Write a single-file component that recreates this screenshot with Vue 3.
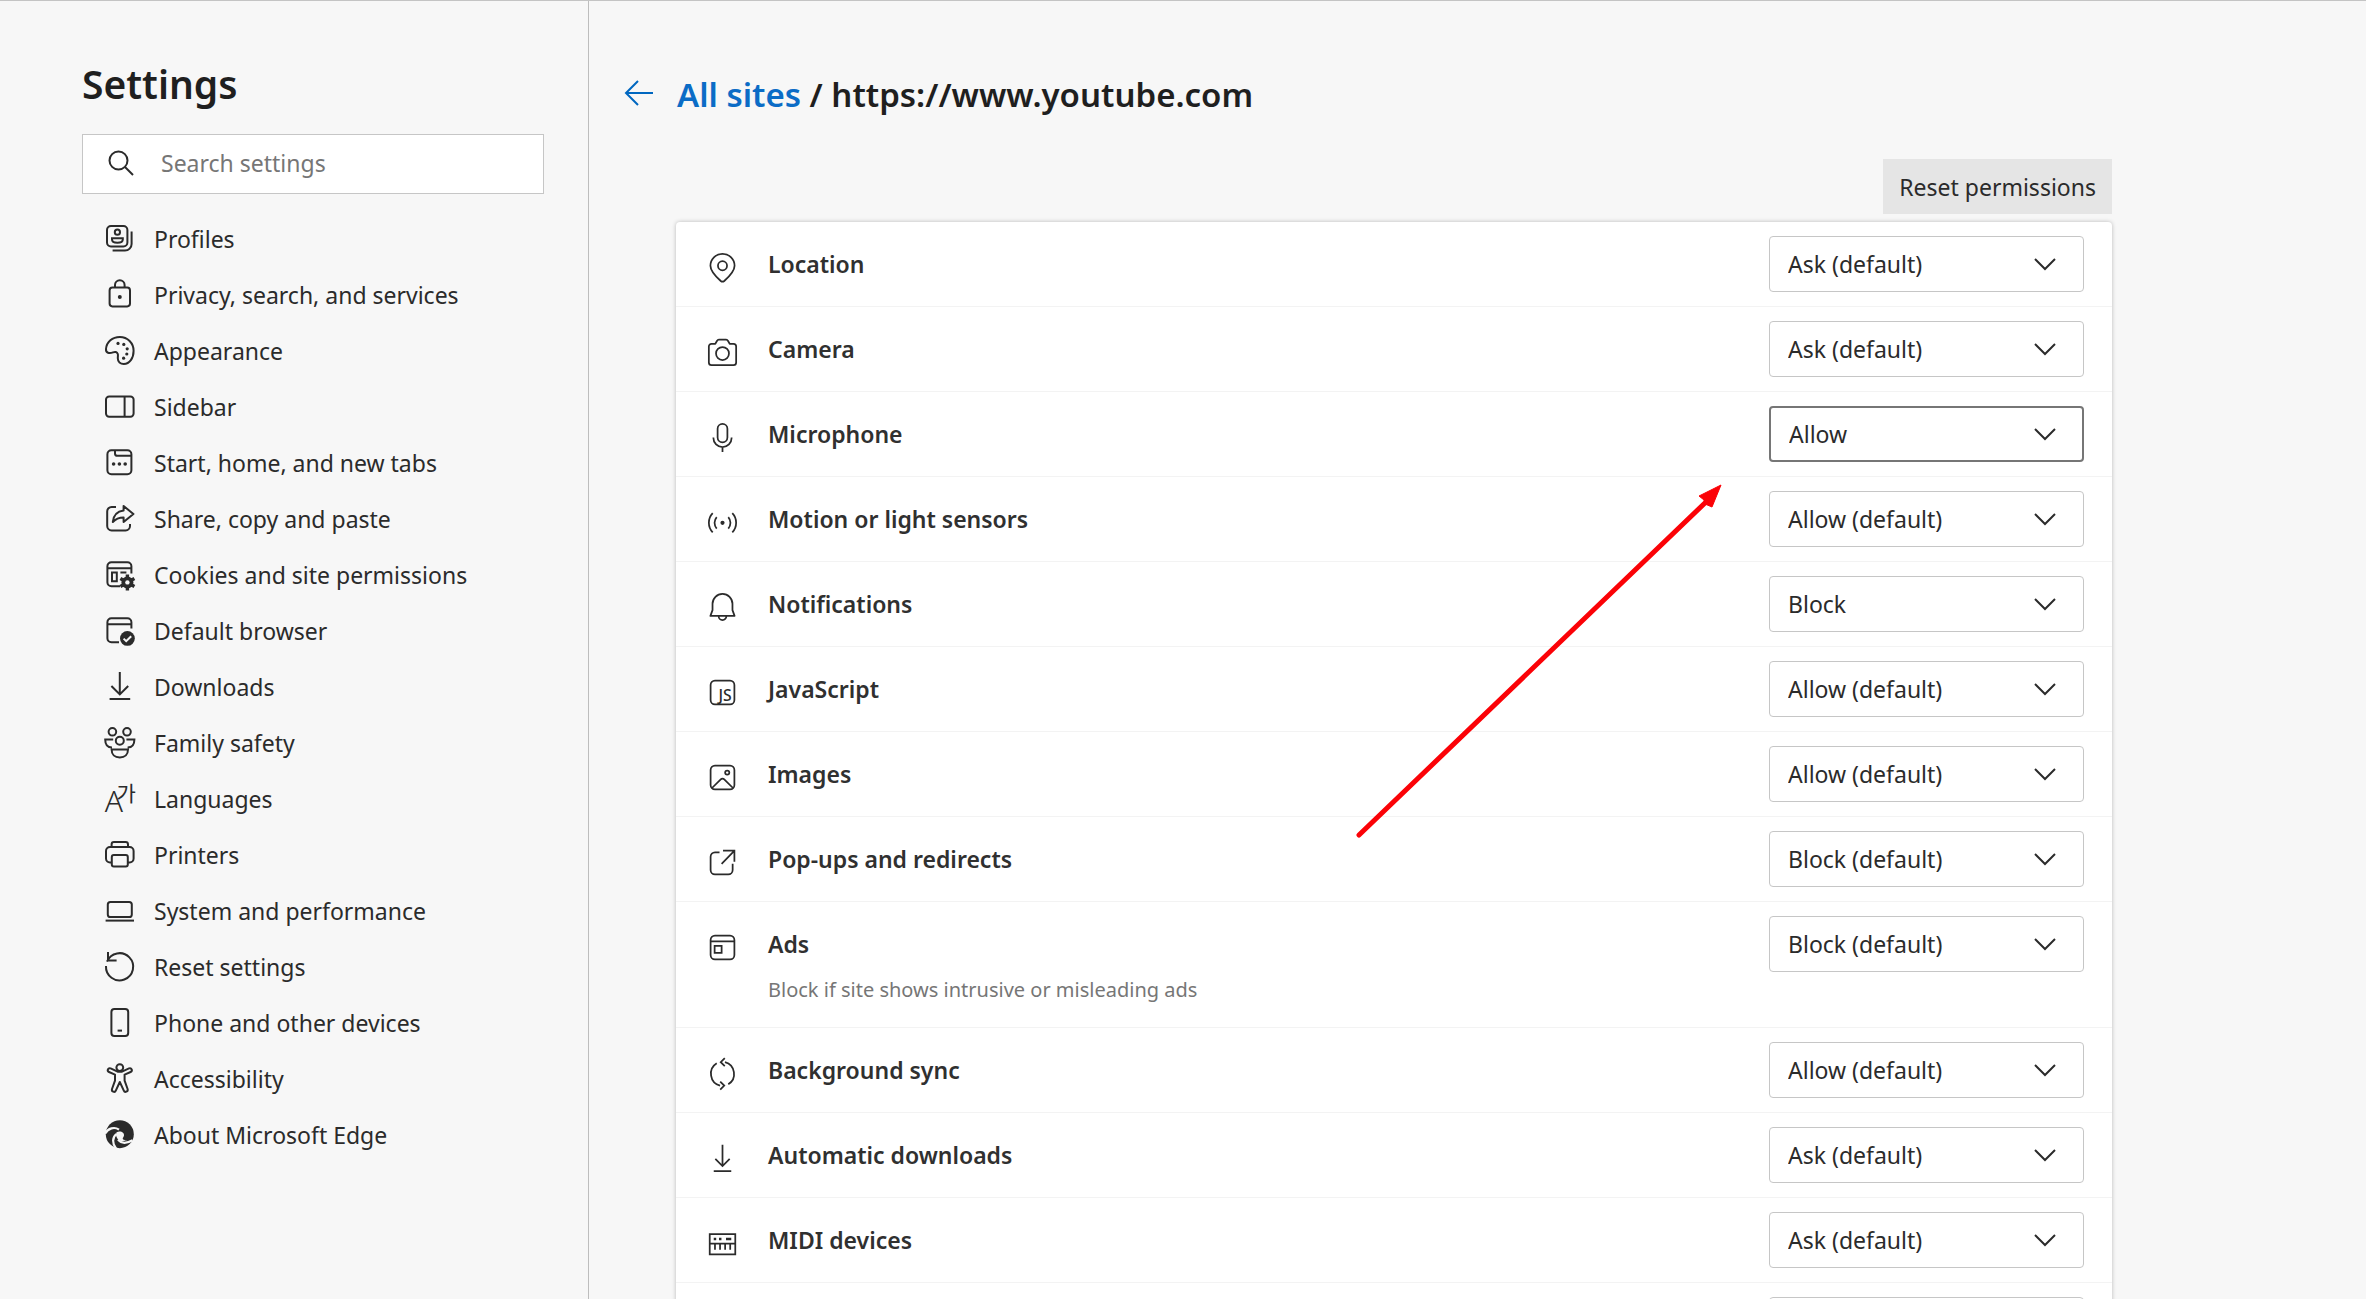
<script setup>
import { ref } from 'vue'

const search = ref("")

// sidebar icons, 16 x 16 grid
const navItems = [
  { label: "Profiles", icon: '<rect x="1.5" y="1.5" width="10.2" height="10.2" rx="2"/><path d="M13.8 4.3v6.2a3.3 3.3 0 0 1-3.3 3.3H4.3"/><circle cx="6.7" cy="4.6" r="1.3"/><path d="M4 7.6h5.4v.7c0 1-1 1.6-2.7 1.6S4 9.3 4 8.3z"/>' },
  { label: "Privacy, search, and services", icon: '<rect x="2.8" y="4.3" width="10.2" height="9.4" rx="1.4"/><path d="M5.5 4.3V3a2.4 2.4 0 0 1 4.8 0v1.3"/><circle cx="7.9" cy="9" r=".5" fill="currentColor"/>' },
  { label: "Appearance", icon: '<path d="M1 7C1.3 3.4 4.2 1 7.9 1c3.9 0 6.9 3 6.9 6.9 0 3.7-2 6.6-4.9 6.6-1.7 0-3-1.1-3-2.9 0-1 .2-1.5 0-2.1-.4-1.1-1.4-1.2-2.4-.8C2.7 9.4.8 9.1 1 7z"/><g fill="currentColor" stroke="none"><circle cx="7" cy="4.2" r=".8"/><circle cx="9.9" cy="4.7" r=".8"/><circle cx="11.6" cy="6.9" r=".8"/><circle cx="11.4" cy="9.5" r=".8"/><circle cx="9.8" cy="11.6" r=".8"/></g>' },
  { label: "Sidebar", icon: '<rect x="1" y="2.7" width="13.8" height="10.2" rx="1.6"/><path d="M10.3 2.7v10.2"/>' },
  { label: "Start, home, and new tabs", icon: '<rect x="1.7" y="1.6" width="12" height="12" rx="2"/><path d="M5.5 1.6v1.6a1.2 1.2 0 0 0 1.2 1.2h7"/><g fill="currentColor" stroke="none"><circle cx="4.8" cy="8.5" r=".9"/><circle cx="7.7" cy="8.5" r=".9"/><circle cx="10.6" cy="8.5" r=".9"/></g>' },
  { label: "Share, copy and paste", icon: '<path d="M6 2H3.8a2.2 2.2 0 0 0-2.2 2.2v7.3a2.2 2.2 0 0 0 2.2 2.2h7a2.2 2.2 0 0 0 2.2-2.2v-1"/><path stroke-linejoin="round" d="M9.8 1.5v2.2C6.5 4.1 4.7 6.3 4.4 9.5c1.5-1.7 3.2-2.3 5.4-2.3v2.3l4.9-4z"/>' },
  { label: "Cookies and site permissions", icon: '<path d="M8 13.6H3.7a2 2 0 0 1-2-2v-8a2 2 0 0 1 2-2h8a2 2 0 0 1 2 2v3.6M1.7 4.6h12"/><path d="M4 6.8h2.4v4.3H4zM8.2 6.8h3"/><circle cx="11.7" cy="11.7" r="3" fill="currentColor" stroke="none"/><path stroke-width="1.7" d="M11.7 7.7v8M8.2 9.7l7 4M8.2 13.7l7-4"/><circle cx="11.7" cy="11.7" r="1.1" fill="#f7f7f7" stroke="none"/>' },
  { label: "Default browser", icon: '<path d="M7.5 13.6H3.7a2 2 0 0 1-2-2v-8a2 2 0 0 1 2-2h8a2 2 0 0 1 2 2v3.2M1.7 4.6h12"/><circle cx="11.7" cy="11.7" r="3.7" fill="currentColor" stroke="none"/><path stroke="#f7f7f7" d="M9.8 11.8l1.3 1.3 2.5-2.5"/>' },
  { label: "Downloads", icon: '<path d="M7.9.5v11M3.7 7.5l4.2 4.2 4.2-4.2M2.8 14h10.3"/>' },
  { label: "Family safety", icon: '<circle cx="4.2" cy="2.4" r="1.9"/><circle cx="11.5" cy="2.4" r="1.9"/><circle cx="7.9" cy="6.9" r="2"/><path d="M4.6 6.2H.6c0 2.6 1 4 3.4 4M11.2 6.2h4c0 2.6-1 4-3.4 4M3.8 11.2h8.2c0 2.4-1.5 4-4.1 4s-4.1-1.6-4.1-4z"/>' },
  { label: "Languages", icon: '<g fill="currentColor" stroke="none"><text x=".4" y="14.3" font-size="15" font-family="Noto Sans" font-weight="300">A</text><text x="6.2" y="9.2" font-size="10.5" font-family="Noto Sans CJK KR">가</text></g>' },
  { label: "Printers", icon: '<path d="M4 11.7H3a2 2 0 0 1-2-2V6a2 2 0 0 1 2-2h9.8a2 2 0 0 1 2 2v3.7a2 2 0 0 1-2 2h-1"/><path d="M3.8 4V2.7A1.2 1.2 0 0 1 5 1.5h5.8A1.2 1.2 0 0 1 12 2.7V4"/><rect x="3.9" y="8" width="8" height="5.7" rx="1"/>' },
  { label: "System and performance", icon: '<rect x="1.9" y="3.5" width="12" height="7.5" rx="1.3"/><path d="M.8 12.8H15"/>' },
  { label: "Reset settings", icon: '<path d="M1.5 5.3A6.8 6.8 0 1 1 1 7.5M2 .5v4.3h4.3"/>' },
  { label: "Phone and other devices", icon: '<rect x="3.7" y="1" width="8.4" height="13.5" rx="1.5"/><path d="M6.8 11.8h2.2"/>' },
  { label: "Accessibility", icon: '<circle cx="7.9" cy="2.3" r="1.7"/><path stroke-linejoin="round" d="M6 3.9L3.3 2.7c-1.3-.5-2 1.3-.8 1.8l3 1.3v3L4 13c-.4 1.3 1.4 2 1.9.8l2-4.3 2 4.3c.5 1.2 2.3.5 1.9-.8l-1.5-4.2v-3l3-1.3c1.2-.5.5-2.3-.8-1.8L9.8 3.9c-1.1.6-2.7.6-3.8 0z"/>' },
  { label: "About Microsoft Edge", icon: '<circle cx="7.9" cy="7.6" r="7" fill="currentColor" stroke="none"/><g stroke="#f7f7f7" stroke-width="1.1"><path d="M.6 7.2C2 4.6 5.2 3.7 7.5 5.3M6 14.7c-2-2.5-1.9-5.5.2-7.2M7 10.3c1.8 2.2 4.8 1.7 7.3.3"/></g><path fill="#f7f7f7" stroke="none" d="M6.3 6.6c2.2-.9 3.9.3 3.7 1.7-.1.9-.8 1.1-.6 1.7.2.5 1.3.7 2.2.5-2 1-4.2.6-5-.9-.6-1.1-.8-2-.3-3z"/>' },
]

const options = ["Ask (default)", "Ask", "Allow (default)", "Allow", "Block (default)", "Block"]

// card icons, 20 x 20 grid
const permissions = ref([
  { label: "Location", value: "Ask (default)", icon: '<path stroke-linejoin="round" d="M10 2.2c3.9 0 6.9 3 6.9 6.8 0 3-2.3 5.5-5.9 8.7-.6.5-1.4.5-2 0C5.4 14.5 3.1 12 3.1 9c0-3.8 3-6.8 6.9-6.8z"/><circle cx="10" cy="9" r="2.6"/>' },
  { label: "Camera", value: "Ask (default)", icon: '<path stroke-linejoin="round" d="M2.2 6.5a1.5 1.5 0 0 1 1.5-1.5h2.2l1-1.7c.2-.4.6-.6 1-.6h4.2c.4 0 .8.2 1 .6l1 1.7h2.2a1.5 1.5 0 0 1 1.5 1.5v9.2a1.5 1.5 0 0 1-1.5 1.5H3.7a1.5 1.5 0 0 1-1.5-1.5z"/><circle cx="10" cy="10.6" r="3.7"/>' },
  { label: "Microphone", value: "Allow", focused: true, icon: '<rect x="7.2" y="2.2" width="5.6" height="10.6" rx="2.8"/><path d="M4.8 10v.3a5.2 5.2 0 0 0 10.4 0V10M10 15.5v2.8"/>' },
  { label: "Motion or light sensors", value: "Allow (default)", icon: '<circle cx="10" cy="10.2" r="1.2" fill="currentColor" stroke="none"/><path d="M6.7 6.9a5 5 0 0 0 0 6.6M13.3 6.9a5 5 0 0 1 0 6.6M4.4 4.7a8 8 0 0 0 0 11M15.6 4.7a8 8 0 0 1 0 11"/>' },
  { label: "Notifications", value: "Block", icon: '<path stroke-linejoin="round" d="M10 2.2a5.7 5.7 0 0 1 5.7 5.7v3.6l1.2 3.3H3.1l1.2-3.3V7.9A5.7 5.7 0 0 1 10 2.2zM7.8 15a2.2 2.2 0 0 0 4.4 0"/>' },
  { label: "JavaScript", value: "Allow (default)", icon: '<rect x="3.2" y="3.2" width="13.6" height="13.6" rx="2.5"/><text x="7.7" y="15.1" font-size="9" font-weight="500" font-family="Noto Sans" fill="currentColor" stroke="none">JS</text>' },
  { label: "Images", value: "Allow (default)", icon: '<rect x="3.2" y="3.2" width="13.6" height="13.6" rx="2.5"/><circle cx="12.7" cy="7.2" r="1.2"/><path d="M4 16l5-4.9a1.4 1.4 0 0 1 2 0l5 4.9"/>' },
  { label: "Pop-ups and redirects", value: "Block (default)", icon: '<path d="M8.3 4.2H5.7a2.5 2.5 0 0 0-2.5 2.5v7.6a2.5 2.5 0 0 0 2.5 2.5h7.6a2.5 2.5 0 0 0 2.5-2.5v-3.6M10.3 3.2h6.5v6.3M16.7 3.3l-7.2 7.5"/>' },
  { label: "Ads", value: "Block (default)", note: "Block if site shows intrusive or misleading ads", icon: '<rect x="3.2" y="3.2" width="13.6" height="13.6" rx="2.5"/><path d="M3.2 6.5h13.6M5.5 9h4v4h-4z"/>' },
  { label: "Background sync", value: "Allow (default)", icon: '<path d="M6.7 4.2a7 7 0 0 0 1.9 12.7M13.3 16.2a7 7 0 0 0-1.9-12.7M11.3 1.2L9 3.5l2.3 2.3M8.7 14.6l2.3 2.3-2.3 2.3"/>' },
  { label: "Automatic downloads", value: "Ask (default)", icon: '<path d="M10 2.2v12M5.9 10.2l4.1 4.1 4.1-4.1M5 17.2h10"/>' },
  { label: "MIDI devices", value: "Ask (default)", icon: '<path d="M2.7 4.7h14.6v11.5H2.7zM2.7 10h14.6M5.7 10v3.5M8.6 10v3.5M11.5 10v3.5M14.4 10v3.5"/><path stroke-width="1.4" d="M5 7.4h1.4M8 7.4h1.4M12 7.4h3"/>' },
  { label: "", value: "", icon: "" },
])

const resetPermissions = () => {
  permissions.value.forEach(item => {
    if (item.value === "Allow" || item.value === "Block") {
      item.value = "Ask (default)"
    }
  })
}
</script>

<template>
  <div class="page">
    <aside class="sidebar">
      <h1>Settings</h1>
      <label class="search">
        <svg viewBox="0 0 26 26"><circle cx="10.5" cy="10.5" r="9" /><path d="M17 17l8 8" /></svg>
        <input type="text" v-model="search" placeholder="Search settings" aria-label="Search settings">
      </label>
      <nav>
        <a href="#" v-for="item in navItems" :key="item.label">
          <svg viewBox="0 0 16 16" v-html="item.icon"></svg>
          <span>{{ item.label }}</span>
        </a>
      </nav>
    </aside>

    <main>
      <header>
        <a href="#" class="back" aria-label="Back">
          <svg viewBox="0 0 30 26"><path d="M29 13H2M14 1L2 13l12 12" /></svg>
        </a>
        <h2><a href="#">All sites</a> / https://www.youtube.com</h2>
      </header>
      <div class="content">
        <div class="actions">
          <button @click="resetPermissions">Reset permissions</button>
        </div>
        <div class="card">
          <div class="row" v-for="(item, i) in permissions" :key="i">
            <svg class="icon" viewBox="0 0 20 20" v-html="item.icon"></svg>
            <div class="text">
              <label :for="'permission-' + i">{{ item.label }}</label>
              <p v-if="item.note">{{ item.note }}</p>
            </div>
            <div class="select" :class="{ focused: item.focused }">
              <select :id="'permission-' + i" v-model="item.value">
                <option v-for="option in options" :key="option">{{ option }}</option>
              </select>
              <svg viewBox="0 0 22 12"><path d="M1 1l10 10L21 1" /></svg>
            </div>
          </div>
        </div>
        <svg class="arrow" viewBox="0 0 368 354">
          <path d="M4 350L352 16" stroke="#fb0207" stroke-width="5" stroke-linecap="round" />
          <path d="M366 0l-22 11 5 4 1 4 7 3z" fill="#fb0207" stroke="#fb0207" />
        </svg>
      </div>
    </main>
  </div>
</template>

<style>
body {
  background-color: #f7f7f7;
}
</style>

<style scoped>
* {
  box-sizing: border-box;
}

.page {
  display: flex;
  height: 100vh;
  overflow: hidden;
  border-top: 1px solid #c4c4c4;
  font-family: "Noto Sans", sans-serif;
  font-size: 23px;
  color: #2b2b2b;
}

a {
  color: inherit;
  text-decoration: none;
}

svg {
  fill: none;
  stroke: currentColor;
  flex-shrink: 0;
  overflow: visible;
}

.sidebar {
  width: 589px;
  flex-shrink: 0;
  padding: 55px 44px 0 82px;
  border-right: 1px solid #bdbdbd;
}

h1 {
  margin: 0;
  font-size: 39px;
  line-height: 56px;
  font-weight: 600;
  color: #1f1f1f;
}

.search {
  display: flex;
  align-items: center;
  gap: 27px;
  height: 60px;
  margin-top: 22px;
  padding: 0 0 2px 25px;
  background-color: white;
  border: 1px solid #c6c6c6;
}

.search svg {
  width: 26px;
  height: 26px;
  stroke-width: 2;
}

.search input {
  flex: 1;
  min-width: 0;
  padding: 0;
  border: none;
  outline: none;
  background: none;
  font: inherit;
}

.search input::placeholder {
  color: #767676;
}

nav {
  display: flex;
  flex-direction: column;
  margin-top: 17px;
  padding-left: 22px;
}

nav a {
  display: flex;
  align-items: center;
  gap: 18px;
  height: 56px;
}

nav svg {
  width: 32px;
  height: 32px;
}

main {
  position: relative;
  flex: 1;
  min-width: 0;
  padding: 0 35px;
  overflow-y: auto;
  scrollbar-width: none;
}

header {
  display: flex;
  align-items: center;
  gap: 23px;
  padding-top: 70px;
}

.back {
  display: flex;
  padding-bottom: 4px;
  color: #0067c0;
}

.back svg {
  width: 30px;
  height: 26px;
  stroke-width: 2;
}

h2 {
  margin: 0;
  font-size: 33px;
  line-height: 48px;
  font-weight: 600;
  color: #1f1f1f;
}

h2 a {
  color: #0b6cc6;
}

.content {
  position: relative;
  max-width: 1488px;
  padding-left: 52px;
}

.actions {
  display: flex;
  justify-content: flex-end;
  padding: 40px 0 8px;
}

.actions button {
  height: 55px;
  padding: 0 16px;
  border: none;
  background-color: #e5e5e5;
  font: inherit;
  color: inherit;
}

.card {
  background-color: white;
  border-radius: 4px;
  box-shadow: 0 0 4px rgba(0, 0, 0, 0.25);
}

.row {
  display: flex;
  align-items: flex-start;
  gap: 28px;
  padding: 14px 28px 14px 29px;
  border-bottom: 1px solid #f3f3f3;
}

.icon {
  width: 35px;
  height: 35px;
  margin-top: 14px;
}

.text {
  flex: 1;
}

.text label {
  display: block;
  line-height: 56px;
  font-weight: 600;
  color: #303030;
}

.text p {
  margin: 0 0 5px;
  font-size: 20px;
  line-height: 36px;
  color: #767676;
}

.select {
  display: grid;
  grid-template-columns: 1fr 22px 27px;
  align-items: center;
  width: 315px;
  height: 56px;
  border: 1px solid #c6c6c6;
  border-radius: 4px;
}

.focused {
  border: 2px solid #767676;
  grid-template-columns: 1fr 22px 26px;
}

.select select {
  grid-area: 1 / 1 / 2 / 4;
  height: 52px;
  padding: 0 0 0 18px;
  border: none;
  outline: none;
  appearance: none;
  background: none;
  font: inherit;
  color: inherit;
}

.select svg {
  grid-area: 1 / 2;
  width: 22px;
  height: 12px;
  stroke-width: 2;
  pointer-events: none;
}

.arrow {
  position: absolute;
  top: 366px;
  right: 389px;
  width: 368px;
  height: 354px;
  pointer-events: none;
}
</style>
